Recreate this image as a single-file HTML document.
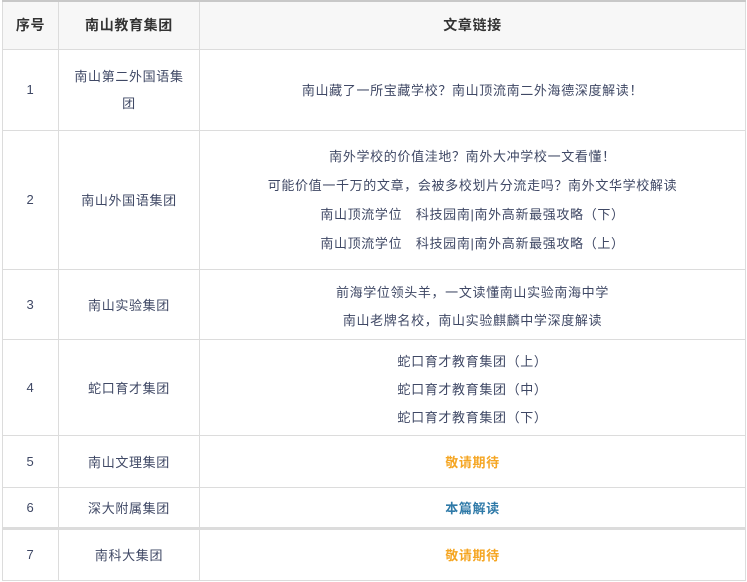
<!DOCTYPE html>
<html><head><meta charset="utf-8"><style>
body{margin:0;background:#fff;width:747px;height:582px;overflow:hidden;font-family:"Liberation Sans","Noto Sans CJK SC",sans-serif;}
table{position:absolute;left:2px;top:0;border-collapse:collapse;width:744px;table-layout:fixed;font-size:13px;letter-spacing:0.65px;color:#3f4865;}
td,th{border:1px solid #dcdcdc;text-align:center;vertical-align:middle;padding:0;}
th{background:#f7f7f7;color:#333;font-weight:bold;font-size:14px;border-top:2px solid #c8c8c8;}
td div{line-height:28px;}
.r2 div{line-height:29px;}
.pt{padding-top:5px;}
.o{color:#f5a623;font-weight:bold;}
.b{color:#2f7aa8;font-weight:bold;}
</style></head><body>
<table>
<colgroup><col style="width:56px"><col style="width:141px"><col></colgroup>
<tr style="height:48px"><th>序号</th><th>南山教育集团</th><th>文章链接</th></tr>
<tr style="height:81px"><td>1</td><td style="padding:0 12px;line-height:27px">南山第二外国语集团</td><td>南山藏了一所宝藏学校？南山顶流南二外海德深度解读！</td></tr>
<tr style="height:139px" class="r2"><td>2</td><td>南山外国语集团</td><td><div>南外学校的价值洼地？南外大冲学校一文看懂！</div><div>可能价值一千万的文章，会被多校划片分流走吗？南外文华学校解读</div><div>南山顶流学位　科技园南|南外高新最强攻略（下）</div><div>南山顶流学位　科技园南|南外高新最强攻略（上）</div></td></tr>
<tr style="height:70px"><td>3</td><td>南山实验集团</td><td class="pt"><div>前海学位领头羊，一文读懂南山实验南海中学</div><div>南山老牌名校，南山实验麒麟中学深度解读</div></td></tr>
<tr style="height:96px"><td>4</td><td>蛇口育才集团</td><td class="pt"><div>蛇口育才教育集团（上）</div><div>蛇口育才教育集团（中）</div><div>蛇口育才教育集团（下）</div></td></tr>
<tr style="height:52px"><td>5</td><td>南山文理集团</td><td class="o">敬请期待</td></tr>
<tr style="height:41px;border-bottom:3px solid #dcdcdc"><td>6</td><td>深大附属集团</td><td class="b">本篇解读</td></tr>
<tr style="height:52px"><td>7</td><td>南科大集团</td><td class="o">敬请期待</td></tr>
</table>
</body></html>
